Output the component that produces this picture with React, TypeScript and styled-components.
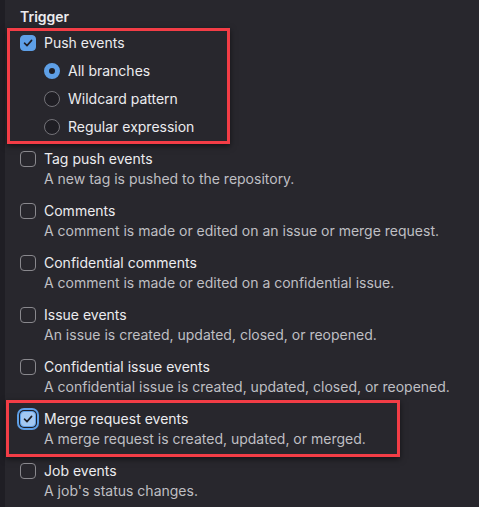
import React from "react";
import styled, { createGlobalStyle } from "styled-components";

const Global = createGlobalStyle`
  html, body { margin: 0; padding: 0; background: #28272d; }
  body { font-family: Inter, "Noto Sans", sans-serif; -webkit-font-smoothing: antialiased; }
`;

const Page = styled.div`
  min-height: 507px;
  box-sizing: border-box;
  border-left: 5px solid #1f1e24;
  padding: 7px 0 0 15px;
  color: #ececef;
  font-size: 14px;
  line-height: 20px;
`;

const Heading = styled.div`
  font-weight: 600;
  color: #ececef;
  margin-bottom: 6px;
`;

const List = styled.div`
  display: flex;
  flex-direction: column;
  gap: 12px;
`;

const Highlight = styled.div<{ $w: number; $mt: number; $mb: number; $ml: number }>`
  box-sizing: border-box;
  width: ${(p) => p.$w}px;
  border: 3px solid #f33d46;
  box-shadow: 0 2px 6px rgba(0, 0, 0, 0.55);
  margin: ${(p) => p.$mt}px 0 ${(p) => p.$mb}px ${(p) => -p.$ml}px;
  padding: ${(p) => -p.$mt - 3}px 0 ${(p) => -p.$mb - 3}px ${(p) => p.$ml - 3}px;
`;

const Group = styled.div`
  display: flex;
  flex-direction: column;
  gap: 8px;
`;

const Row = styled.label<{ $indent?: boolean }>`
  display: flex;
  align-items: flex-start;
  gap: 8px;
  padding-left: ${(p) => (p.$indent ? 24 : 0)}px;
`;

const Box = styled.span<{ $checked?: boolean; $focus?: boolean }>`
  flex: none;
  box-sizing: border-box;
  width: 16px;
  height: 16px;
  margin-top: 2px;
  border-radius: 4px;
  display: flex;
  align-items: center;
  justify-content: center;
  border: 1px solid ${(p) => (p.$checked ? (p.$focus ? "#5d9ee6" : "#5e9fe6") : "#89888d")};
  background: ${(p) => (p.$checked ? (p.$focus ? "#a3c8f1" : "#5e9fe6") : "#28272d")};
  box-shadow: ${(p) => (p.$focus ? "0 0 0 1px #1f1e24, 0 0 0 3px #5e9fe6" : "none")};
`;

const Radio = styled.span<{ $checked?: boolean }>`
  flex: none;
  box-sizing: border-box;
  width: 16px;
  height: 16px;
  margin-top: 2px;
  border-radius: 50%;
  display: flex;
  align-items: center;
  justify-content: center;
  border: ${(p) => (p.$checked ? "5px solid #5e9fe6" : "1px solid #737278")};
  background: ${(p) => (p.$checked ? "#1f1e24" : "#1f1e24")};
`;

const Text = styled.div`
  display: flex;
  flex-direction: column;
`;

const Title = styled.span`
  color: #ececef;
  white-space: nowrap;
`;

const Desc = styled.span`
  color: #bfbfc3;
  white-space: nowrap;
`;

const Check = () => (
  <svg width="10" height="10" viewBox="0 0 10 10">
    <path d="M1.5 5.2 L4 7.6 L8.6 2.4" fill="none" stroke="#1f1e24" strokeWidth="1.6" strokeLinecap="round" strokeLinejoin="round" />
  </svg>
);

type Item = { title: string; desc: string; checked?: boolean; focus?: boolean };

const items: Item[] = [
  { title: "Tag push events", desc: "A new tag is pushed to the repository." },
  { title: "Comments", desc: "A comment is made or edited on an issue or merge request." },
  { title: "Confidential comments", desc: "A comment is made or edited on a confidential issue." },
  { title: "Issue events", desc: "An issue is created, updated, closed, or reopened." },
  { title: "Confidential issue events", desc: "A confidential issue is created, updated, closed, or reopened." },
  { title: "Merge request events", desc: "A merge request is created, updated, or merged.", checked: true, focus: true },
  { title: "Job events", desc: "A job's status changes." },
];

const CheckItem = ({ it }: { it: Item }) => (
  <Row>
    <Box $checked={it.checked} $focus={it.focus}>{it.checked && <Check />}</Box>
    <Text>
      <Title>{it.title}</Title>
      <Desc>{it.desc}</Desc>
    </Text>
  </Row>
);

export default function App() {
  return (
    <>
      <Global />
      <Page>
        <Heading>Trigger</Heading>
        <List>
          <Highlight $w={223} $mt={-5} $mb={-7} $ml={13}>
            <Group>
              <Row>
                <Box $checked><Check /></Box>
                <Title>Push events</Title>
              </Row>
              <Row $indent>
                <Radio $checked />
                <Title>All branches</Title>
              </Row>
              <Row $indent>
                <Radio />
                <Title>Wildcard pattern</Title>
              </Row>
              <Row $indent>
                <Radio />
                <Title>Regular expression</Title>
              </Row>
            </Group>
          </Highlight>
          {items.map((it) =>
            it.focus ? (
              <Highlight key={it.title} $w={394} $mt={-9} $mb={-8} $ml={14}>
                <CheckItem it={it} />
              </Highlight>
            ) : (
              <CheckItem key={it.title} it={it} />
            )
          )}
        </List>
      </Page>
    </>
  );
}
